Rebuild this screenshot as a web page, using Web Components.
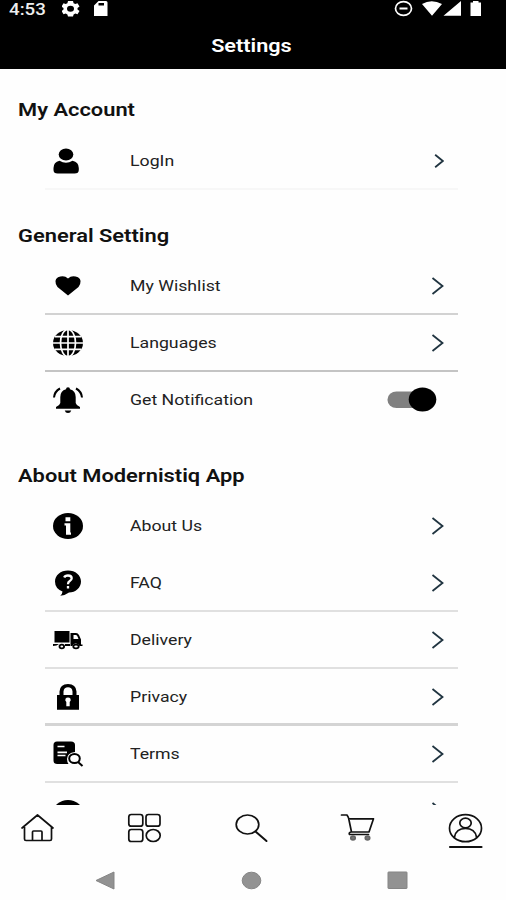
<!DOCTYPE html>
<html lang="en">
<head>
<meta charset="utf-8">
<title>Settings</title>
<style>
    body {
        margin: 0;
        background: #fefefe;
        font-family: Roboto, "Liberation Sans", sans-serif;
        color: #000;
    }
</style>
</head>
<body>
<settings-app>
    <status-bar slot="top" time="4:53"></status-bar>
    <title-bar slot="top">Settings</title-bar>

    <settings-group label="My Account" first>
        <settings-row icon="user" line="faint" small>LogIn</settings-row>
    </settings-group>
    <settings-group label="General Setting">
        <settings-row icon="heart" line="normal">My Wishlist</settings-row>
        <settings-row icon="globe" line="strong">Languages</settings-row>
        <settings-row icon="bell">Get Notification<toggle-switch slot="end"></toggle-switch></settings-row>
    </settings-group>
    <settings-group label="About Modernistiq App" last>
        <settings-row icon="info">About Us</settings-row>
        <settings-row icon="faq" line="light">FAQ</settings-row>
        <settings-row icon="truck" line="light">Delivery</settings-row>
        <settings-row icon="lock" line="thick">Privacy</settings-row>
        <settings-row icon="terms" line="light">Terms</settings-row>
        <settings-row icon="help">Need Help</settings-row>
    </settings-group>

    <tab-bar slot="bottom"></tab-bar>
    <system-nav slot="bottom"></system-nav>
</settings-app>

<script>
const ICONS = {
    user: `<ellipse cx="13" cy="6.6" rx="7.3" ry="6"/><path d="M6.5 12.7Q13 17 19.500 12.700Q25.800 14 25.800 20V22Q25.800 25.600 21.500 25.600H4.700Q.5 25.600 .5 22V20Q.5 14 6.500 12.700Z"/>`,
    heart: `<path d="M15 22.500L4.500 14Q0 7.500 5 4.300Q11 1.500 15 5.500Q19 1.500 25 4.300Q30 7.500 25.500 14Z"/>`,
    globe: `<ellipse cx="15" cy="13" rx="15" ry="13"/><g fill="none" stroke="#fefefe" stroke-width="1.700"><path d="M15 0V26M0 13H30M2 6.700H28M2 19.300H28"/><ellipse cx="15" cy="13" rx="7.500" ry="13.500"/></g>`,
    bell: `<path d="M15 0.300Q17 .3 17 2.300Q22.700 4 22.700 10V16Q23.300 18.500 27 20V21.700H3V20Q6.700 18.500 7.300 16V10Q7.300 4 13 2.300Q13 .3 15 .3ZM11.700 23.500H18.300Q17.500 26 15 26Q12.500 26 11.700 23.500Z"/><path d="M1 10.500Q1.500 4.500 7 1.500M29 10.500Q28.500 4.500 23 1.500" fill="none" stroke="#000" stroke-width="2"/>`,
    info: `<ellipse cx="15" cy="13" rx="15" ry="13"/><path fill="#fefefe" d="M12.500 4.300H17.300V8.300H12.500ZM11.500 10.300H17.300V19.500H18V21.700H13V12.500H11.500Z"/>`,
    faq: `<path d="M15 0.500C22.500 .5 28 5.300 28 11.500S22.500 22.500 16 22.500Q12 25.500 7.300 25.700Q9.500 23.500 9.500 21.500Q2 18.500 2 11.500C2 5.300 7.500 .5 15 .5Z"/><path fill="none" stroke="#fefefe" stroke-width="2.300" d="M11.200 7.500Q12 5.500 15 5.500Q18.700 5.500 18.700 8.300Q18.700 10 16.500 11.300Q15 12.200 15 14.300M15 16V18.500"/>`,
    truck: `<path d="M1.500 4H16.500V15.500H1.500ZM17.500 6H23Q25 6 26 8L28 12.500V17.500H29.500V19H26.500Q25.500 16.500 23 16.500Q20 16.500 19.500 19H17.500ZM0 17H6Q4 19 0 19ZM12 17H17V19H12Z"/><path d="M20.500 8H23Q24 8 24.500 9.500L25.500 12H20.500Z" fill="#fefefe"/><g fill="#fefefe" stroke="#000" stroke-width="1.800"><ellipse cx="8.800" cy="19.500" rx="2.300" ry="1.900"/><ellipse cx="23" cy="19.500" rx="2.700" ry="1.900"/></g>`,
    lock: `<path fill-rule="evenodd" d="M4 11H6.500V7.500Q7 0 15 0Q23 0 23.500 7.500V11H26V25.700H4ZM10.500 11H19.500V7.500Q19 3.300 15 3.300Q11 3.300 10.500 7.500ZM13.300 22.300H16.700V18Q18.300 16.500 17.500 14.800Q16.700 13.500 15 13.500Q13.300 13.500 12.500 14.800Q11.700 16.500 13.300 18Z"/>`,
    terms: `<path d="M4 0.500H18Q22 .5 22 4V11Q14 12 14 18Q14 21 15.500 23H4Q.5 23 .5 19.500V4Q.5 .5 4 .5Z"/><path stroke="#fefefe" stroke-width="1.700" d="M4.500 5.500H11.500M4.500 11.300H14M4.500 14.500H12.500"/><ellipse cx="21.500" cy="17.500" rx="5.300" ry="4.600" fill="#fefefe" stroke="#000" stroke-width="2"/><path d="M25 21L29.500 25" stroke="#000" stroke-width="2"/>`,
    help: `<ellipse cx="15" cy="15" rx="15" ry="13"/><path d="M10 10Q15 4.500 20 10V20H10Z" fill="#fefefe"/>`
};

/* Status icons and clock at the top of the screen */
class StatusBar extends HTMLElement {
    constructor() {
        super();
        this.attachShadow({ mode: "open" });
        this.shadowRoot.innerHTML = `
            <style>
                :host {
                    display: flex;
                    justify-content: space-between;
                    height: 22px;
                    padding: 0 23px 0 9px;
                    background: #000;
                    color: #eee;
                }
                .left { display: flex; }
                .time {
                    width: 53px;
                    font-size: 17px;
                    line-height: 18px;
                    font-weight: 500;
                }
                .time span {
                    display: inline-block;
                    transform: scaleX(1.1);
                    transform-origin: left;
                }
                svg { display: block; fill: #fff; }
            </style>
            <div class="left">
                <div class="time"><span></span></div>
                <svg width="48" height="18" viewBox="62 0 48 18">
                    <path fill-rule="evenodd" d="M68 1H73L73.600 3.300L75.300 4L77.500 3.300L79.500 6.500L77.500 8L77.500 9.500L79.500 11L77.500 14.300L75.300 13.500L73.600 14.500L73 16.500H68L67.400 14.500L65.700 13.500L63.500 14.300L61.500 11L63.500 9.500V8L61.500 6.500L63.500 3.300L65.700 4L67.400 3.300ZM70.500 5.700A3.500 3 0 1 0 70.500 11.700A3.500 3 0 1 0 70.500 5.700Z"/>
                    <path fill-rule="evenodd" d="M98.500 1H106Q107.500 1 107.500 2.500V16H94V5.500ZM98.500 3V5.500H104V3Z"/>
                </svg>
            </div>
            <svg width="89" height="18" viewBox="394 0 89 18">
                <ellipse cx="403.500" cy="8.500" rx="8" ry="6.800" fill="none" stroke="#fff" stroke-width="1.700"/>
                <path d="M399.500 7.500H407.500V9.500H399.500ZM422 4Q431.500 -1.500 442 4L432 15.800ZM443.500 15.800L461 1V15.800ZM473 1H478.500V2.500H481V16H470.500V2.500H473Z"/>
            </svg>
        `;
    }

    connectedCallback() {
        this.shadowRoot.querySelector("span").textContent = this.getAttribute("time");
    }
}

class TitleBar extends HTMLElement {
    constructor() {
        super();
        this.attachShadow({ mode: "open" });
        this.shadowRoot.innerHTML = `
            <style>
                :host {
                    display: block;
                    height: 47px;
                    box-sizing: border-box;
                    padding: 12px 4px 0 0;
                    background: #000;
                    color: #fff;
                    font-size: 18.5px;
                    line-height: 24px;
                    font-weight: 600;
                    text-align: center;
                }
                span { display: inline-block; transform: scaleX(1.17); }
            </style>
            <span><slot></slot></span>
        `;
    }
}

class SettingsGroup extends HTMLElement {
    constructor() {
        super();
        this.attachShadow({ mode: "open" });
        this.shadowRoot.innerHTML = `
            <style>
                :host { display: block; padding-top: 34px; }
                :host([first]) { padding-top: 29px; }
                :host([first]) h2 { margin-bottom: 11px; }
                :host([last]) { padding-top: 35px; }
                h2 {
                    margin: 0 0 10px 18px;
                    width: max-content;
                    font-size: 18.5px;
                    line-height: 24px;
                    font-weight: 600;
                    transform: scaleX(1.182);
                    transform-origin: left;
                    color: #111;
                }
            </style>
            <h2></h2>
            <slot></slot>
        `;
    }

    connectedCallback() {
        this.shadowRoot.querySelector("h2").textContent = this.getAttribute("label");
    }
}

class SettingsRow extends HTMLElement {
    constructor() {
        super();
        this.attachShadow({ mode: "open" });
        this.shadowRoot.innerHTML = `
            <style>
                :host {
                    display: flex;
                    align-items: center;
                    box-sizing: border-box;
                    height: 57px;
                    margin: 0 48px 0 45px;
                    padding: 0 14px 2px 8px;
                    background: linear-gradient(var(--line, transparent) 0 0) bottom / 100% var(--thickness, 2px) no-repeat;
                }
                :host([line="faint"]) { --line: #f7f7f7; }
                :host([line="light"]) { --line: #e0e0e0; }
                :host([line="normal"]) { --line: #d2d2d2; }
                :host([line="strong"]) { --line: #c4c4c4; }
                :host([line="thick"]) { --line: #d4d4d4; --thickness: 3px; }
                .icon { flex: none; width: 30px; height: 26px; overflow: visible; }
                .label {
                    flex: 1;
                    margin-left: 46.5px;
                    font-size: 15px;
                    line-height: 20px;
                    color: #222;
                    white-space: nowrap;
                }
                .label span {
                    display: inline-block;
                    transform: scaleX(1.18);
                    transform-origin: left;
                }
                .arrow { display: block; fill: none; stroke: #203440; stroke-width: 1.800; }
                .arrow path { vector-effect: non-scaling-stroke; }
                :host([small]) .arrow { width: 10px; height: 14px; }
            </style>
            <svg class="icon" viewBox="0 0 30 26"></svg>
            <div class="label"><span><slot></slot></span></div>
            <slot name="end">
                <svg class="arrow" width="13" height="18" viewBox="0 0 13 18" preserveAspectRatio="none"><path d="M1.500 1L11.500 9L1.500 17"/></svg>
            </slot>
        `;
    }

    connectedCallback() {
        this.shadowRoot.querySelector(".icon").innerHTML = ICONS[this.getAttribute("icon")];
    }
}

class ToggleSwitch extends HTMLElement {
    constructor() {
        super();
        this.attachShadow({ mode: "open" });
        this.shadowRoot.innerHTML = `
            <style>
                :host { display: block; margin-right: 7px; }
                svg { display: block; }
            </style>
            <svg width="50" height="26" viewBox="0 0 50 26">
                <rect x="0.500" y="4.500" width="40" height="16.500" rx="9" ry="8" fill="#808080"/>
                <ellipse cx="35.500" cy="12.500" rx="13.800" ry="12"/>
            </svg>
        `;
    }
}

class TabBar extends HTMLElement {
    constructor() {
        super();
        this.attachShadow({ mode: "open" });
        this.shadowRoot.innerHTML = `
            <style>
                :host {
                    display: flex;
                    justify-content: space-between;
                    box-sizing: border-box;
                    height: 53px;
                    padding: 7px 22px 0 20px;
                    background: #fefefe;
                }
                svg { fill: none; stroke: #111; stroke-width: 1.700; stroke-linejoin: round; stroke-linecap: round; }
            </style>
            <svg width="35" height="38" viewBox="20 812 35 38"><path d="M22 828L37.500 815L53 828M24.500 827V839Q24.500 840.500 26 840.500H50Q51.500 840.500 51.500 839V827M32.500 840V832Q32.500 831 33.500 831H41Q42 831 42 832V840"/></svg>
            <svg width="35" height="38" viewBox="127 812 35 38"><rect x="128.800" y="814.500" width="14" height="11.700" rx="2.500"/><rect x="146" y="814.500" width="14" height="11.700" rx="2.500"/><rect x="128.800" y="829.500" width="14" height="12" rx="2.500"/><ellipse cx="153.200" cy="835.500" rx="7" ry="6"/></svg>
            <svg width="35" height="38" viewBox="234 812 35 38"><ellipse cx="247.500" cy="824.500" rx="11.300" ry="9.500"/><path d="M255.500 831.500L266.500 841" stroke-width="2"/></svg>
            <svg width="36" height="38" viewBox="337 812 36 38"><path d="M338.500 815H344Q345.500 817 346 820L348.500 832H366L370.500 818.800H346M348 832Q345.500 832.500 346.500 834.500H365.500"/><g fill="#777" stroke="#666"><ellipse cx="350" cy="838" rx="2.200" ry="1.800"/><ellipse cx="364.500" cy="838" rx="2.200" ry="1.800"/></g></svg>
            <svg width="36" height="38" viewBox="448 812 36 38"><ellipse cx="465.500" cy="828.200" rx="16" ry="13.500"/><ellipse cx="465.500" cy="823" rx="5.700" ry="4.800"/><path d="M454.500 837Q456 828.500 465.500 828.500Q475 828.500 476.500 837"/><path d="M450 847H481.500" stroke-width="2.200"/></svg>
        `;
    }
}

class SystemNav extends HTMLElement {
    constructor() {
        super();
        this.attachShadow({ mode: "open" });
        this.shadowRoot.innerHTML = `
            <style>
                :host {
                    display: flex;
                    justify-content: space-between;
                    align-items: center;
                    box-sizing: border-box;
                    height: 42px;
                    padding: 3px 98px 0 95px;
                    background: #fefefe;
                }
                svg { fill: #929292; stroke: #858585; }
            </style>
            <svg width="20" height="19"><path d="M1 9.500L19 1V18Z"/></svg>
            <svg width="21" height="19"><ellipse cx="10.500" cy="9.500" rx="9.300" ry="8.300"/></svg>
            <svg width="21" height="19"><rect x="1" y="1" width="19" height="16.500" rx="0.500"/></svg>
        `;
    }
}

/* Phone screen: fixed bars around a list that runs under the tabs */
class SettingsApp extends HTMLElement {
    constructor() {
        super();
        this.attachShadow({ mode: "open" });
        this.shadowRoot.innerHTML = `
            <style>
                :host { display: flex; flex-direction: column; width: 506px; height: 900px; overflow: hidden; }
                main { flex: 1; min-height: 0; overflow: hidden; }
            </style>
            <slot name="top"></slot>
            <main><slot></slot></main>
            <slot name="bottom"></slot>
        `;
    }
}

customElements.define("status-bar", StatusBar);
customElements.define("title-bar", TitleBar);
customElements.define("toggle-switch", ToggleSwitch);
customElements.define("settings-row", SettingsRow);
customElements.define("settings-group", SettingsGroup);
customElements.define("tab-bar", TabBar);
customElements.define("system-nav", SystemNav);
customElements.define("settings-app", SettingsApp);
</script>
</body>
</html>
